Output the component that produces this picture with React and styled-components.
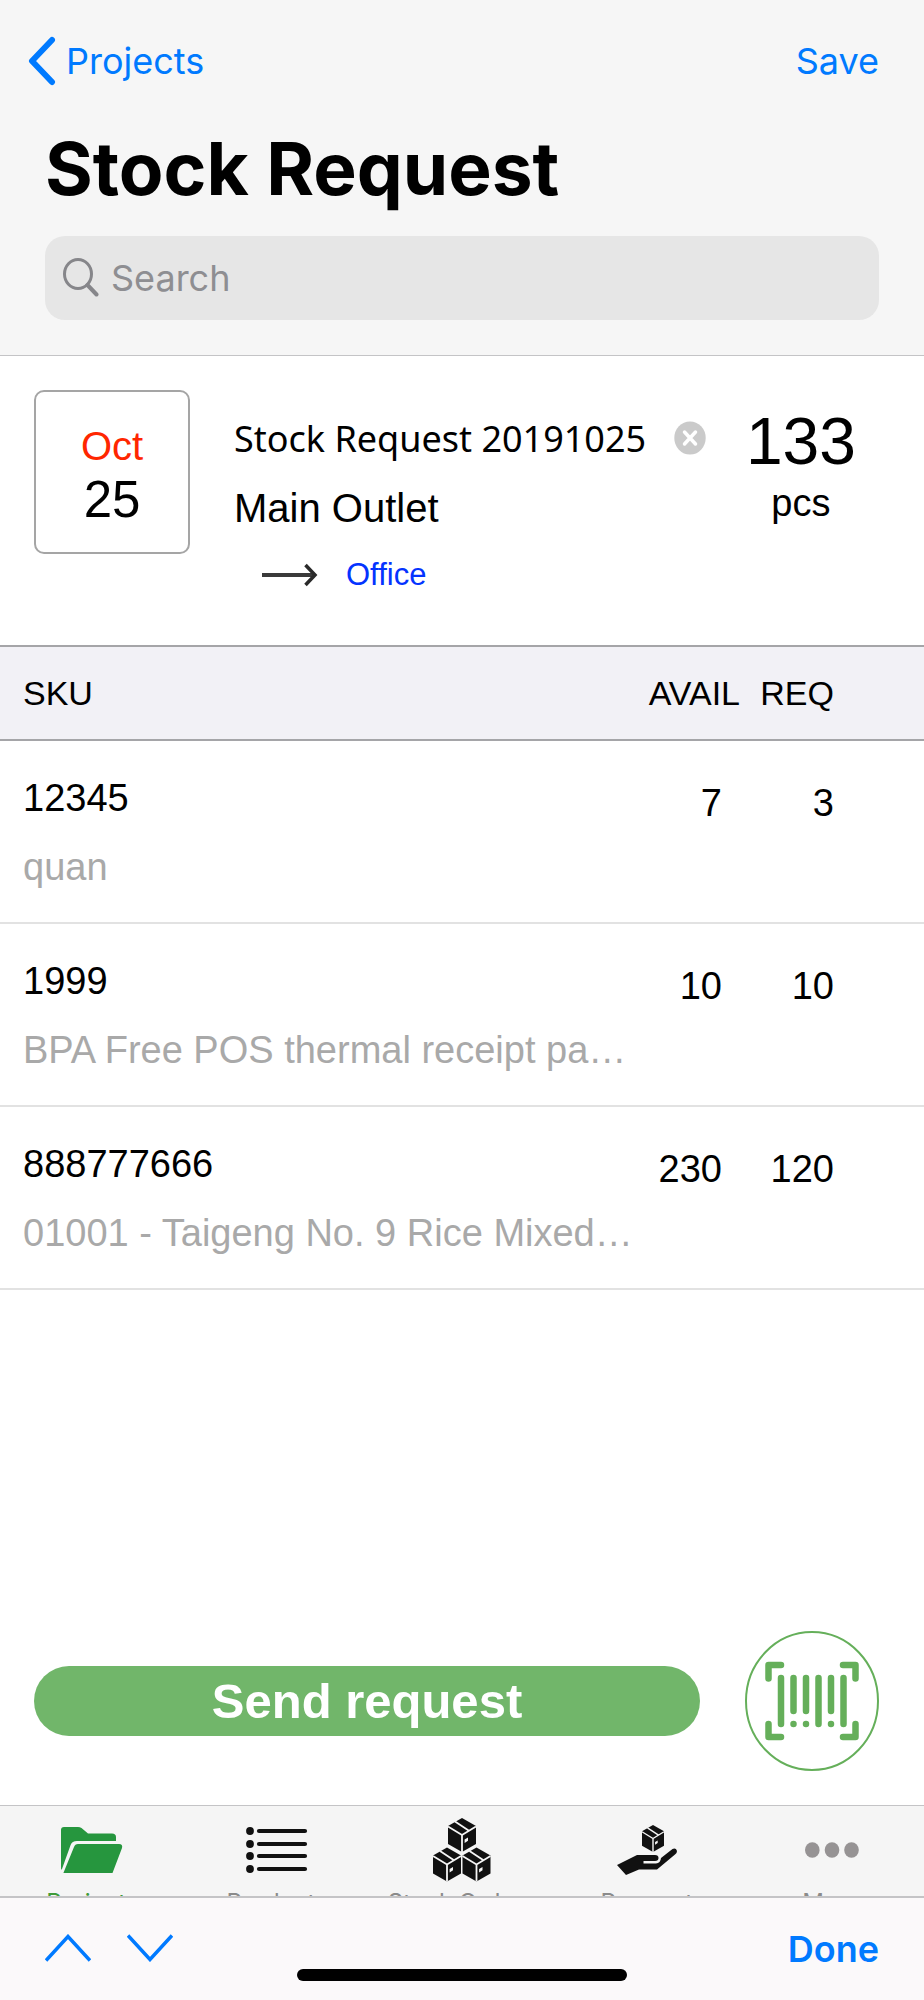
import styled, { createGlobalStyle } from "styled-components"

const items = [
    { sku: "12345", name: "quan", avail: 7, req: 3 },
    { sku: "1999", name: "BPA Free POS thermal receipt pa…", avail: 10, req: 10 },
    { sku: "888777666", name: "01001 - Taigeng No. 9 Rice Mixed…", avail: 230, req: 120 },
]

const Box = ({ x, y, w, h }) => (
    <g transform={`translate(${x} ${y}) scale(${w / 28} ${h / 34})`}>
        <path d="M14 0 L28 8 V26 L14 34 L0 26 V8 Z" />
        <path d="M0 8.500 L14 17 L28 8.500 M14 17 V34 M7 3.500 L21 12.700" fill="none" stroke="#f5f5f5" strokeWidth="1.800" />
        <path d="M16.600 21.500 L20 19.600 V22.800 L16.600 25 Z" fill="#f5f5f5" />
    </g>
)

const FolderIcon = () => (
    <Glyph width="62" height="46" viewBox="0 0 62 46" fill="#26963e">
        <path d="M0 3 Q0 0 3 0 H17 Q19 0 20.500 1 L27 6.500 H51 Q55 6.500 55 10 V14 H16 Q11 14 9.600 18 L1 42 Q0 44 0 40 Z" />
        <path d="M2.400 46 L13 20 Q14 17 17 17 H58 Q62 17 61 21 L51.500 46 Z" />
    </Glyph>
)

const ListIcon = () => (
    <Glyph width="62" height="46" viewBox="0 0 62 46" fill="#111" stroke="#111">
        {[4, 17, 29, 42].map((y) => (
            <g key={y}>
                <circle cx="4" cy={y} r="3.900" stroke="none" />
                <path d={`M13 ${y} H59`} strokeWidth="4.200" strokeLinecap="round" />
            </g>
        ))}
    </Glyph>
)

const BoxesIcon = () => (
    <Glyph width="58" height="64" viewBox="0 0 58 64" fill="#111">
        <Box x={15} y={0} w={28} h={34} />
        <Box x={0} y={29.5} w={28} h={34} />
        <Box x={29.5} y={29.5} w={28} h={34} />
    </Glyph>
)

const HandIcon = () => (
    <Glyph width="60" height="50" viewBox="0 0 60 50" fill="#111">
        <Box x={25} y={0} w={22} h={27} />
        <path d="M0 40 L20 30 H38 Q41.500 30 41.500 33 Q41.500 36 38 36 H26.500 V38.500 H39 Q43.500 38 44 33 L55.500 24 Q59 22.500 60 26 Q60 28 58 29.500 L40 44.500 H22 L9 50 Z" />
    </Glyph>
)

const MoreIcon = () => (
    <Glyph width="54" height="16" viewBox="0 0 54 16" fill="#969394">
        <ellipse cx="7.300" cy="8" rx="7.300" ry="7.800" />
        <ellipse cx="27" cy="8" rx="7.300" ry="7.800" />
        <ellipse cx="46.500" cy="8" rx="7.300" ry="7.800" />
    </Glyph>
)

const tabs = [
    { label: "Projects", icon: FolderIcon, active: true },
    { label: "Products", icon: ListIcon },
    { label: "Stock Orders", icon: BoxesIcon },
    { label: "Request", icon: HandIcon },
    { label: "More", icon: MoreIcon },
]

export default function App() {
    return (
        <Screen>
            <GlobalStyle />
            <Header>
                <NavRow>
                    <NavButton type="button">
                        <svg width="28" height="50" viewBox="0 0 28 50" fill="none" stroke="#007aff" strokeWidth="6" strokeLinecap="round" strokeLinejoin="round">
                            <path d="M24 4 L4 25 L24 46" />
                        </svg>
                        Projects
                    </NavButton>
                    <NavButton type="button">Save</NavButton>
                </NavRow>
                <Title>Stock Request</Title>
                <SearchBox>
                    <svg width="36" height="40" viewBox="0 0 36 40" fill="none" stroke="#86868a" strokeLinecap="round">
                        <ellipse cx="15" cy="16" rx="13.500" ry="14.500" strokeWidth="3" />
                        <path d="M24.500 27 L33.500 36.500" strokeWidth="4" />
                    </svg>
                    <input type="search" placeholder="Search" aria-label="Search" />
                </SearchBox>
            </Header>

            <Summary>
                <DateCard>
                    <Month>Oct</Month>
                    <Day>25</Day>
                </DateCard>
                <Details>
                    <NameField>
                        <input type="text" defaultValue="Stock Request 20191025" aria-label="Request name" />
                        <button type="button" aria-label="Clear">
                            <svg width="32" height="34" viewBox="0 0 32 34">
                                <ellipse cx="16" cy="17" rx="15.700" ry="16.500" fill="#cacaca" />
                                <path d="M10.500 11 L21.500 23 M21.500 11 L10.500 23" stroke="#fff" strokeWidth="3.500" strokeLinecap="round" />
                            </svg>
                        </button>
                    </NameField>
                    <Outlet>Main Outlet</Outlet>
                    <Target>
                        <svg width="56" height="24" viewBox="0 0 56 24" fill="none" stroke="#3a3a3a" strokeWidth="4">
                            <path d="M0 12 H53" />
                            <path d="M43.500 2 L53 12 L43.500 22" stroke="#2a2a2a" strokeWidth="3.500" />
                        </svg>
                        <a href="#office">Office</a>
                    </Target>
                </Details>
                <Total>
                    <strong>133</strong>
                    <span>pcs</span>
                </Total>
            </Summary>

            <StockTable>
                <thead>
                    <tr>
                        <th>SKU</th>
                        <th>AVAIL</th>
                        <th>REQ</th>
                    </tr>
                </thead>
                <tbody>
                    {items.map((item) => (
                        <tr key={item.sku}>
                            <td>
                                <Sku>{item.sku}</Sku>
                                <ItemName>{item.name}</ItemName>
                            </td>
                            <td>{item.avail}</td>
                            <td>{item.req}</td>
                        </tr>
                    ))}
                </tbody>
            </StockTable>

            <Actions>
                <SendButton type="button">Send request</SendButton>
                <ScanButton type="button" aria-label="Scan barcode">
                    <svg width="134" height="140" viewBox="0 0 134 140" fill="none" stroke="#65af5a" strokeLinecap="round" strokeLinejoin="round">
                        <ellipse cx="67" cy="70" rx="66" ry="69" strokeWidth="2" />
                        <path strokeWidth="6.500" d="M23.500 47.500 V34 H36 M98 34 H110.500 V47.500 M110.500 93 V106 H98 M36 106 H23.500 V93" />
                        <path strokeWidth="6.500" d="M36 47 V93 M48.500 47 V80 M61 47 V80 M73.500 47 V93 M86 47 V80 M98.500 47 V93 M48.500 93 V93.100 M61 93 V93.100 M86 93 V93.100" />
                    </svg>
                </ScanButton>
            </Actions>

            <TabBar>
                {tabs.map(({ label, icon: Icon, active }) => (
                    <Tab key={label} href={"#" + label} $active={active}>
                        <IconSlot><Icon /></IconSlot>
                        {label}
                    </Tab>
                ))}
            </TabBar>

            <Accessory>
                <Arrows>
                    <button type="button" aria-label="Previous field">
                        <svg width="46" height="28" viewBox="0 0 46 28" fill="none" stroke="#007aff" strokeWidth="3.500">
                            <path d="M1 26.500 L23 2.500 L45 26.500" />
                        </svg>
                    </button>
                    <button type="button" aria-label="Next field">
                        <svg width="46" height="28" viewBox="0 0 46 28" fill="none" stroke="#007aff" strokeWidth="3.500">
                            <path d="M1 1.500 L23 25.500 L45 1.500" />
                        </svg>
                    </button>
                </Arrows>
                <DoneButton type="button">Done</DoneButton>
                <HomeIndicator />
            </Accessory>
        </Screen>
    )
}

const GlobalStyle = createGlobalStyle`
    * {
        box-sizing: border-box;
    }

    body {
        margin: 0;
        background-color: #fff;
        color: #000;
        font-family: "Liberation Sans", Arial, sans-serif;
    }

    button, input {
        border: none;
        background: none;
        padding: 0;
        font: inherit;
        color: inherit;
    }

    svg {
        display: block;
        flex-shrink: 0;
    }
`

const Screen = styled.div`
    min-height: 100vh;
    display: flex;
    flex-direction: column;
`

const Header = styled.header`
    background-color: #f6f6f6;
    border-bottom: 1px solid #c4c4c6;
    padding: 36px 45px 35px;
    font-family: Inter, sans-serif;
`

const NavRow = styled.nav`
    display: flex;
    justify-content: space-between;
    align-items: center;
    margin-left: -17px;
`

const NavButton = styled.button`
    display: flex;
    align-items: center;
    gap: 10px;
    height: 50px;
    color: #007aff;
    font-size: 36px;
`

const Title = styled.h1`
    margin: 39px 0 23px;
    font-size: 73px;
    line-height: 88px;
    font-weight: 700;
`

const SearchBox = styled.label`
    display: flex;
    align-items: center;
    gap: 12px;
    height: 84px;
    padding: 0 18px;
    border-radius: 20px;
    background-color: #e6e6e6;

    input {
        flex: 1;
        min-width: 0;
        font-size: 36px;
        outline: none;
    }

    input::placeholder {
        color: #8e8e92;
        opacity: 1;
    }
`

const Summary = styled.section`
    display: flex;
    align-items: flex-start;
    min-height: 289px;
    padding: 34px 68px 0 34px;
`

const DateCard = styled.div`
    width: 156px;
    height: 164px;
    padding-top: 32px;
    border: 2px solid #a5a5a5;
    border-radius: 10px;
    text-align: center;
`

const Month = styled.div`
    font-size: 40px;
    line-height: 44px;
    color: #ff2600;
`

const Day = styled.div`
    font-size: 51px;
    line-height: 64px;
`

const Details = styled.div`
    flex: 1;
    min-width: 0;
    padding: 24px 40px 0 44px;
`

const NameField = styled.div`
    display: flex;
    align-items: center;
    height: 48px;

    input {
        flex: 1;
        min-width: 0;
        font-family: "Noto Sans", sans-serif;
        font-size: 36px;
        outline: none;
    }
`

const Outlet = styled.div`
    margin-top: 23px;
    font-size: 40px;
    line-height: 46px;
`

const Target = styled.div`
    display: flex;
    align-items: center;
    gap: 28px;
    margin: 26px 0 0 28px;
    line-height: 36px;

    a {
        color: #0433ff;
        font-size: 31px;
        text-decoration: none;
    }
`

const Total = styled.div`
    display: flex;
    flex-direction: column;
    align-items: center;
    padding-top: 12px;

    strong {
        font-size: 66px;
        line-height: 78px;
        font-weight: 400;
    }

    span {
        font-size: 38px;
        line-height: 46px;
    }
`

const StockTable = styled.table`
    width: 100%;
    table-layout: fixed;
    border-collapse: collapse;

    th {
        height: 94px;
        padding: 0;
        background-color: #f2f1f6;
        border-top: 2px solid #a5a5a8;
        border-bottom: 2px solid #a5a5a8;
        font-size: 34px;
        font-weight: 400;
        text-align: right;
    }

    th:first-child {
        padding-left: 23px;
        text-align: left;
    }

    th:nth-child(2) {
        width: 100px;
    }

    th:last-child {
        width: 184px;
        padding-right: 90px;
    }

    td {
        height: 183px;
        padding: 40px 0 0;
        border-bottom: 2px solid #e2e2e2;
        font-size: 38px;
        line-height: 44px;
        text-align: right;
        vertical-align: top;
    }

    td:first-child {
        padding: 35px 0 0 23px;
        text-align: left;
    }

    td:nth-child(2) {
        padding-right: 18px;
    }

    td:last-child {
        padding-right: 90px;
    }
`

const Sku = styled.div`
    line-height: 44px;
`

const ItemName = styled.div`
    margin-top: 25px;
    color: #a9a9a9;
    white-space: nowrap;
    overflow: hidden;
    text-overflow: ellipsis;
`

const Actions = styled.section`
    display: flex;
    align-items: center;
    gap: 45px;
    margin-top: auto;
    padding: 0 45px 34px 34px;
`

const SendButton = styled.button`
    flex: 1;
    height: 70px;
    border-radius: 35px;
    background-color: #71b66a;
    color: #fff;
    font-size: 49px;
    font-weight: 700;
`

const ScanButton = styled.button`
    border-radius: 50%;
`

const TabBar = styled.nav`
    display: grid;
    grid-template-columns: repeat(5, 1fr);
    height: 91px;
    overflow: hidden;
    border-top: 1px solid #c4c4c6;
    background-color: #f5f5f5;
`

const Tab = styled.a`
    display: flex;
    flex-direction: column;
    align-items: center;
    font-family: Inter, sans-serif;
    font-size: 24px;
    line-height: 28px;
    white-space: nowrap;
    text-decoration: none;
    color: ${(props) => (props.$active ? "#3f9b3a" : "#8b8b8b")};
`

const IconSlot = styled.span`
    display: flex;
    align-items: center;
    justify-content: center;
    height: 83px;
    flex-shrink: 0;
    padding-top: 5px;
`

const Glyph = styled.svg`
    overflow: visible;
`

const Accessory = styled.footer`
    position: relative;
    display: flex;
    justify-content: space-between;
    align-items: flex-start;
    height: 104px;
    padding: 29px 45px 0;
    border-top: 2px solid #c4c4c6;
    background-color: #fbf9fa;
`

const Arrows = styled.div`
    display: flex;
    gap: 36px;
    padding-top: 7px;
`

const DoneButton = styled.button`
    color: #007aff;
    font-family: Inter, sans-serif;
    font-size: 36px;
    line-height: 44px;
    font-weight: 600;
`

const HomeIndicator = styled.div`
    position: absolute;
    bottom: 19px;
    left: 50%;
    width: 330px;
    height: 12px;
    border-radius: 6px;
    background-color: #000;
    transform: translateX(-50%);
`
